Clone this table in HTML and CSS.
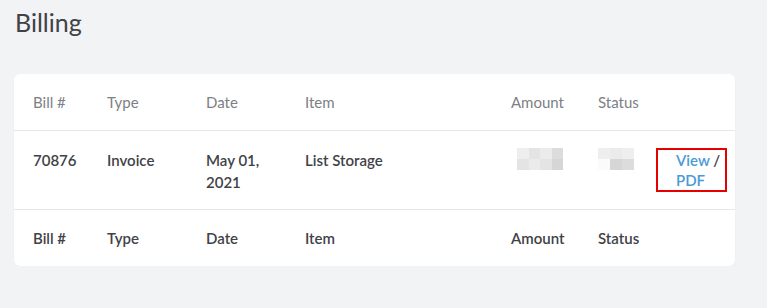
FILE: index.html
```html
<!DOCTYPE html>
<html lang="en">
<head>
  <meta charset="UTF-8" />
  <meta name="viewport" content="width=device-width, initial-scale=1" />
  <title>Billing</title>
  <link rel="stylesheet" href="styles.css">
</head>
<body>
  <h1 class="page-title">Billing</h1>

  <section class="card">
    <table class="bills">
      <colgroup>
        <col style="width: 74px">
        <col style="width: 99px">
        <col style="width: 99px">
        <col style="width: 206px">
        <col style="width: 87px">
        <col style="width: 77px">
        <col style="width: 79px">
      </colgroup>
      <thead>
        <tr>
          <th>Bill #</th>
          <th>Type</th>
          <th>Date</th>
          <th>Item</th>
          <th>Amount</th>
          <th>Status</th>
          <th></th>
        </tr>
      </thead>
      <tbody>
        <tr>
          <td>70876</td>
          <td>Invoice</td>
          <td>May 01,<br>2021</td>
          <td>List Storage</td>
          <td>
            <div class="blur blur-amount">
              <span class="px p1"></span><span class="px p2"></span><span class="px p3"></span><span class="px p4"></span>
              <span class="px p2"></span><span class="px p3"></span><span class="px p2"></span><span class="px p5"></span>
            </div>
          </td>
          <td>
            <div class="blur blur-status">
              <span class="px p1"></span><span class="px p3"></span><span class="px p1"></span>
              <span class="px p0"></span><span class="px p5"></span><span class="px p4"></span>
            </div>
          </td>
          <td class="actions">
            <div class="action-box">
              <a href="#">View</a> / <a href="#">PDF</a>
            </div>
          </td>
        </tr>
      </tbody>
      <tfoot>
        <tr>
          <th>Bill #</th>
          <th>Type</th>
          <th>Date</th>
          <th>Item</th>
          <th>Amount</th>
          <th>Status</th>
          <th></th>
        </tr>
      </tfoot>
    </table>
  </section>
</body>
</html>
```

FILE: styles.css
```css
* {
  box-sizing: border-box;
}
body {
  margin: 0;
  padding: 0 32px 0 14px;
  background: #f2f3f5;
  font-family: 'Source Sans Pro', 'Lato', 'Open Sans', sans-serif;
  color: #3f4246;
}
.page-title {
  margin: 0;
  padding: 5px 0 0 1px;
  font-size: 25px;
  font-weight: 400;
  line-height: 34px;
  color: #3f4246;
}
.card {
  margin-top: 35px;
  background: #fff;
  border-radius: 6px;
  box-shadow: 0 1px 2px rgba(0, 0, 0, 0.04);
  overflow: hidden;
}
.bills {
  width: 100%;
  border-collapse: collapse;
  table-layout: fixed;
  font-size: 15px;
}
.bills th,
.bills td {
  padding: 17px 0 17px 19px;
  line-height: 22px;
  text-align: left;
  vertical-align: top;
}
.bills thead th {
  font-weight: 400;
  color: #7d8085;
  border-bottom: 1px solid #e6e7ea;
}
.bills tbody td {
  padding-top: 18px;
  padding-bottom: 16px;
  font-weight: 600;
  color: #3f4246;
}
.bills tfoot th {
  font-weight: 600;
  color: #3f4246;
  border-top: 1px solid #e6e7ea;
}
.bills td.actions {
  padding-left: 0;
  padding-right: 8px;
}
.action-box {
  margin-top: -1px;
  border: 2px solid #e60000;
  padding-left: 18px;
  line-height: 20px;
  font-weight: 600;
  color: #3f4246;
}
.action-box a {
  color: #4a9ad6;
  text-decoration: none;
}
.blur {
  display: grid;
  grid-template-rows: 11px 11px;
  margin: -1px 0 0 6px;
}
.blur-amount {
  grid-template-columns: repeat(4, 11.5px);
}
.blur-status {
  margin-left: 0;
  grid-template-columns: repeat(3, 12px);
}
.px.p0 { background: #fbfbfb; }
.px.p1 { background: #eeeeee; }
.px.p2 { background: #e4e4e4; }
.px.p3 { background: #ebebeb; }
.px.p4 { background: #dcdcdc; }
.px.p5 { background: #d6d6d6; }
```
